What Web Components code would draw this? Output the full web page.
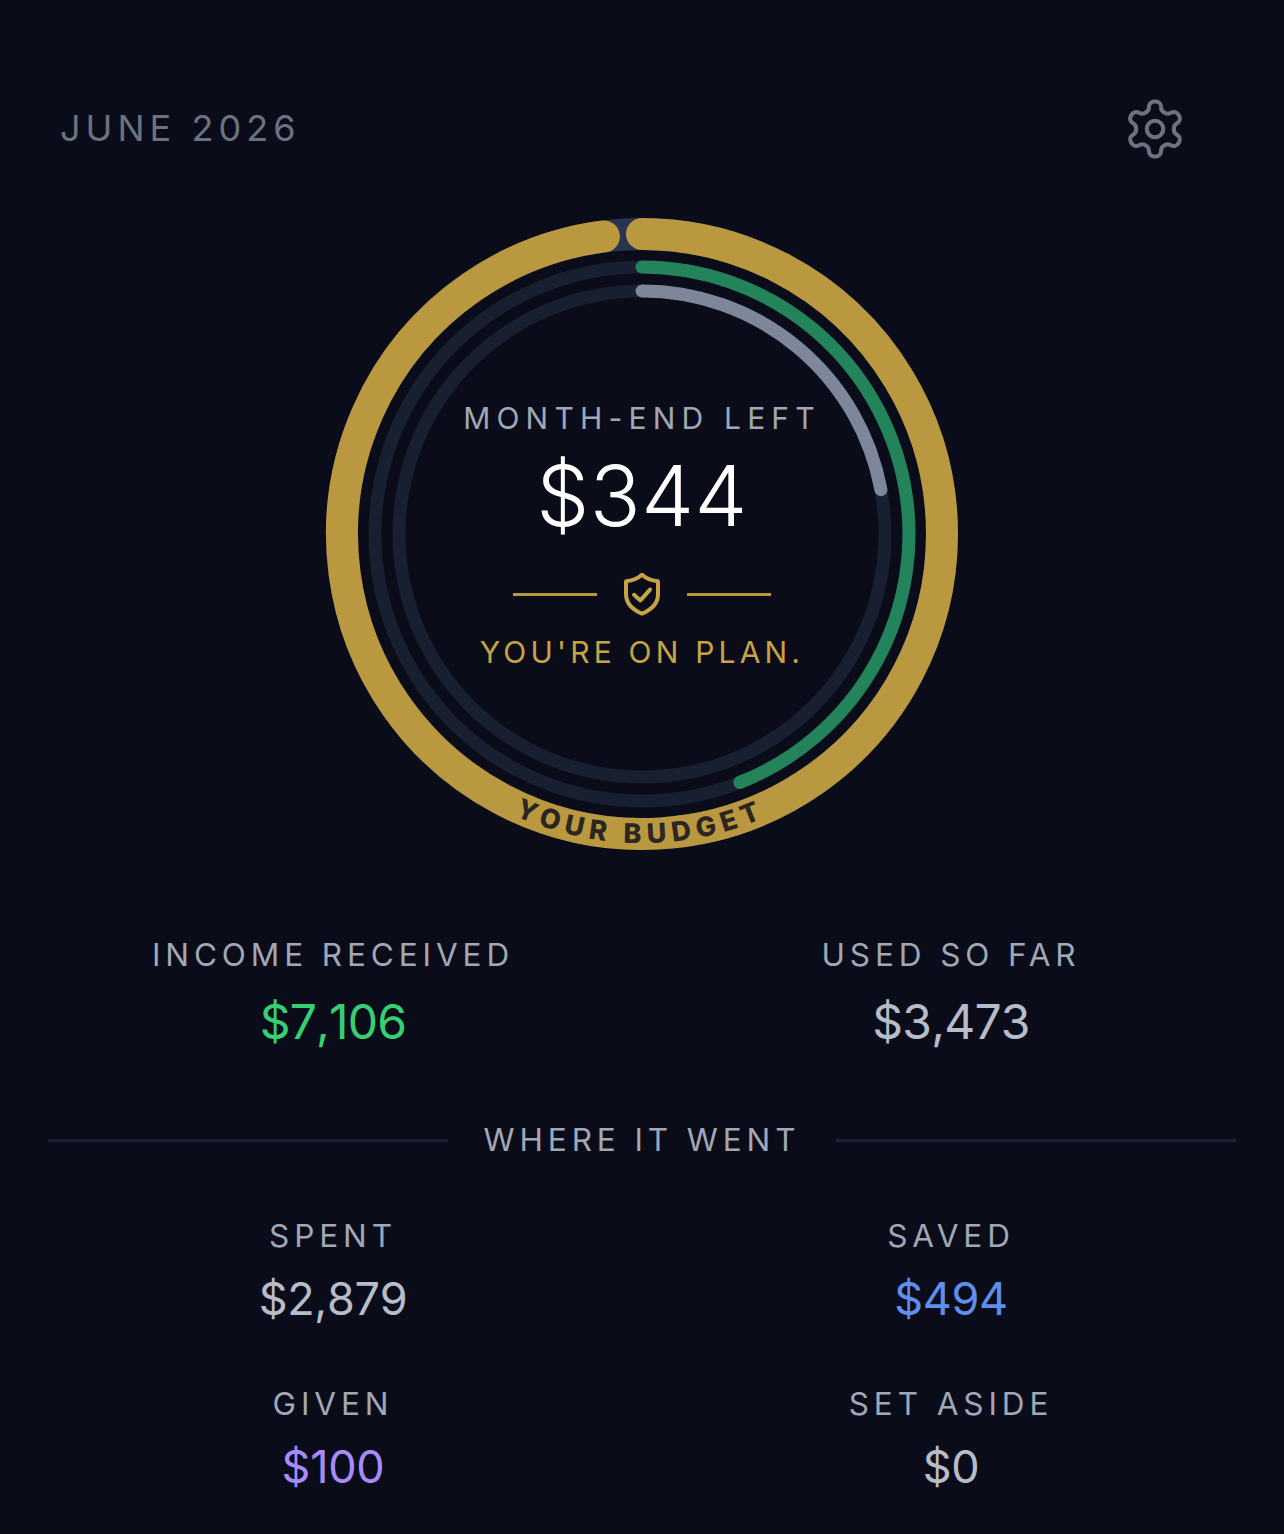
<!doctype html>
<html>
<head>
<meta charset="utf-8">
<style>
  html, body { margin: 0; background: #0a0d19; }
  body { font-family: Inter, "Liberation Sans", sans-serif; width: 1284px; height: 1534px; overflow: hidden; }
</style>
</head>
<body>
<budget-screen>
  <month-header slot="header" month="JUNE 2026"></month-header>
  <budget-ring slot="ring" amount="$344" label="MONTH-END LEFT" status="YOU'RE ON PLAN."></budget-ring>
  <stat-item slot="top" size="big" label="INCOME RECEIVED" value="$7,106" color="#34d073"></stat-item>
  <stat-item slot="top" size="big" label="USED SO FAR" value="$3,473"></stat-item>
  <section-rule slot="rule">WHERE IT WENT</section-rule>
  <stat-item slot="rest" label="SPENT" value="$2,879"></stat-item>
  <stat-item slot="rest" label="SAVED" value="$494" color="#5f8fea"></stat-item>
  <stat-item slot="rest" label="GIVEN" value="$100" color="#a78bfa"></stat-item>
  <stat-item slot="rest" label="SET ASIDE" value="$0"></stat-item>
</budget-screen>

<script>
// outer page: header, ring, then the stat grids
class BudgetScreen extends HTMLElement {
  constructor() {
    super()
    this.attachShadow({ mode: 'open' }).innerHTML = `<style>
      :host { display: block; }
      .ring { display: flex; justify-content: center; margin-top: 52px; }
      .top { display: grid; grid-template-columns: 1fr 1fr; column-gap: 48px; padding: 0 48px; margin-top: 83px; }
      .rule { margin-top: 70px; }
      .rest { display: grid; grid-template-columns: 1fr 1fr; column-gap: 48px; row-gap: 60px; padding: 0 48px; margin-top: 60px; }
    </style>
    <slot name="header"></slot>
    <div class="ring"><slot name="ring"></slot></div>
    <div class="top"><slot name="top"></slot></div>
    <div class="rule"><slot name="rule"></slot></div>
    <div class="rest"><slot name="rest"></slot></div>`
  }
}

class MonthHeader extends HTMLElement {
  constructor() {
    super()
    this.attachShadow({ mode: 'open' }).innerHTML = `<style>
      :host { display: flex; justify-content: space-between; align-items: center; padding: 96px 96px 0 60px; }
      .month { font-size: 36px; font-weight: 400; letter-spacing: 5.04px; color: #6b7280; padding-bottom: 2px; }
      svg { display: block; width: 66px; height: 66px; }
    </style>
    <div class="month">${this.getAttribute('month')}</div>
    <svg viewBox="0 0 24 24" fill="none" stroke="#6b7280" stroke-width="1.5" stroke-linecap="round" stroke-linejoin="round">
      <path d="M12.22 2h-.44a2 2 0 0 0-2 2v.18a2 2 0 0 1-1 1.73l-.43.25a2 2 0 0 1-2 0l-.15-.08a2 2 0 0 0-2.73.73l-.22.38a2 2 0 0 0 .73 2.73l.15.1a2 2 0 0 1 1 1.72v.51a2 2 0 0 1-1 1.74l-.15.09a2 2 0 0 0-.73 2.73l.22.38a2 2 0 0 0 2.73.73l.15-.08a2 2 0 0 1 2 0l.43.25a2 2 0 0 1 1 1.73V20a2 2 0 0 0 2 2h.44a2 2 0 0 0 2-2v-.18a2 2 0 0 1 1-1.73l.43-.25a2 2 0 0 1 2 0l.15.08a2 2 0 0 0 2.73-.73l.22-.39a2 2 0 0 0-.73-2.73l-.15-.08a2 2 0 0 1-1-1.74v-.5a2 2 0 0 1 1-1.74l.15-.09a2 2 0 0 0 .73-2.73l-.22-.38a2 2 0 0 0-2.73-.73l-.15.08a2 2 0 0 1-2 0l-.43-.25a2 2 0 0 1-1-1.73V4a2 2 0 0 0-2-2z"/>
      <circle cx="12" cy="12" r="3"/>
    </svg>`
  }
}

// point on a circle, degrees clockwise from 12 o'clock
function polar(r, deg) {
  const a = deg * Math.PI / 180
  return [(320 + r * Math.sin(a)).toFixed(2), (320 - r * Math.cos(a)).toFixed(2)]
}
function arc(r, from, to) {
  const [x0, y0] = polar(r, from)
  const [x1, y1] = polar(r, to)
  return `M${x0} ${y0}A${r} ${r} 0 ${to - from > 180 ? 1 : 0} 1 ${x1} ${y1}`
}

class BudgetRing extends HTMLElement {
  constructor() {
    super()
    const textR = 309
    const [tx0, ty0] = polar(textR, 240)
    const [tx1, ty1] = polar(textR, 120)
    this.attachShadow({ mode: 'open' }).innerHTML = `<style>
      :host { display: grid; width: 640px; height: 640px; }
      svg.ring, .center { grid-area: 1 / 1; }
      svg { display: block; }
      text { font-family: Inter, "Liberation Sans", sans-serif; font-size: 27px; font-weight: 800; letter-spacing: 5.9px; fill: #2b2620; }
      .center { display: flex; flex-direction: column; align-items: center; padding-top: 186px; }
      .label { font-size: 30px; line-height: 36px; letter-spacing: 6.2px; color: #a1a7b5; }
      .amount { font-size: 84px; line-height: 100px; font-weight: 300; letter-spacing: .5px; color: #fff; margin-top: 10px; }
      .mark { display: flex; align-items: center; gap: 21px; margin-top: 24px; }
      .mark i { display: block; width: 84px; height: 3px; background: #b9983f; }
      .mark svg { width: 48px; height: 48px; }
      .status { font-size: 30px; line-height: 36px; letter-spacing: 4.2px; color: #c8a345; margin-top: 16px; }
    </style>
    <svg class="ring" width="640" height="640" viewBox="0 0 640 640" fill="none" stroke-linecap="round">
      <circle cx="320" cy="320" r="300" stroke="#2a3350" stroke-width="32"/>
      <path d="${arc(300, 0, 352.7)}" stroke="#b9983f" stroke-width="32"/>
      <circle cx="320" cy="320" r="267" stroke="#171f30" stroke-width="13"/>
      <circle cx="320" cy="320" r="243" stroke="#171f30" stroke-width="13"/>
      <path d="${arc(267, 0, 158.5)}" stroke="#23835a" stroke-width="13"/>
      <path d="${arc(243, 0, 79.5)}" stroke="#7d8799" stroke-width="13"/>
      <path id="curve" d="M${tx0} ${ty0}A${textR} ${textR} 0 0 0 ${tx1} ${ty1}"/>
      <text text-anchor="middle"><textPath href="#curve" startOffset="49.8%">YOUR BUDGET</textPath></text>
    </svg>
    <div class="center">
      <div class="label">${this.getAttribute('label')}</div>
      <div class="amount">${this.getAttribute('amount')}</div>
      <div class="mark">
        <i></i>
        <svg viewBox="0 0 24 24" fill="none" stroke="#c8a345" stroke-width="2" stroke-linecap="round" stroke-linejoin="round">
          <path d="M12 2.4c2 1.7 4.8 2.9 7.4 3.1.3 0 .6.3.6.6V12c0 5-3.6 8-8 9.8C7.600 20 4 17 4 12V6.100c0-.3.3-.6.6-.6 2.600-.2 5.400-1.400 7.400-3.100z"/>
          <path d="M8 12.400l3.200 2.800 4.800-5.400"/>
        </svg>
        <i></i>
      </div>
      <div class="status">${this.getAttribute('status')}</div>
    </div>`
  }
}

class StatItem extends HTMLElement {
  constructor() {
    super()
    const color = this.getAttribute('color') || '#b6bcc8'
    const big = this.getAttribute('size') === 'big'
    this.attachShadow({ mode: 'open' }).innerHTML = `<style>
      :host { display: flex; flex-direction: column; align-items: center; }
      .label { font-size: 31.5px; line-height: 36px; letter-spacing: 4.9px; color: #a1a7b5; }
      .value { font-size: ${big ? 48 : 45}px; line-height: ${big ? 60 : 54}px; font-kerning: none; letter-spacing: ${big ? -0.8 : -0.3}px; color: ${color}; margin-top: ${big ? 19 : 18}px; }
    </style>
    <div class="label">${this.getAttribute('label')}</div>
    <div class="value">${this.getAttribute('value')}</div>`
  }
}

class SectionRule extends HTMLElement {
  constructor() {
    super()
    this.attachShadow({ mode: 'open' }).innerHTML = `<style>
      :host { display: flex; align-items: center; gap: 36px; padding: 0 48px; font-size: 31.5px; line-height: 36px; letter-spacing: 4.9px; color: #a1a7b5; }
      i { flex: 1; height: 3px; background: #1e2133; }
    </style>
    <i></i><slot></slot><i></i>`
  }
}

customElements.define('budget-screen', BudgetScreen)
customElements.define('month-header', MonthHeader)
customElements.define('budget-ring', BudgetRing)
customElements.define('stat-item', StatItem)
customElements.define('section-rule', SectionRule)
</script>
</body>
</html>
